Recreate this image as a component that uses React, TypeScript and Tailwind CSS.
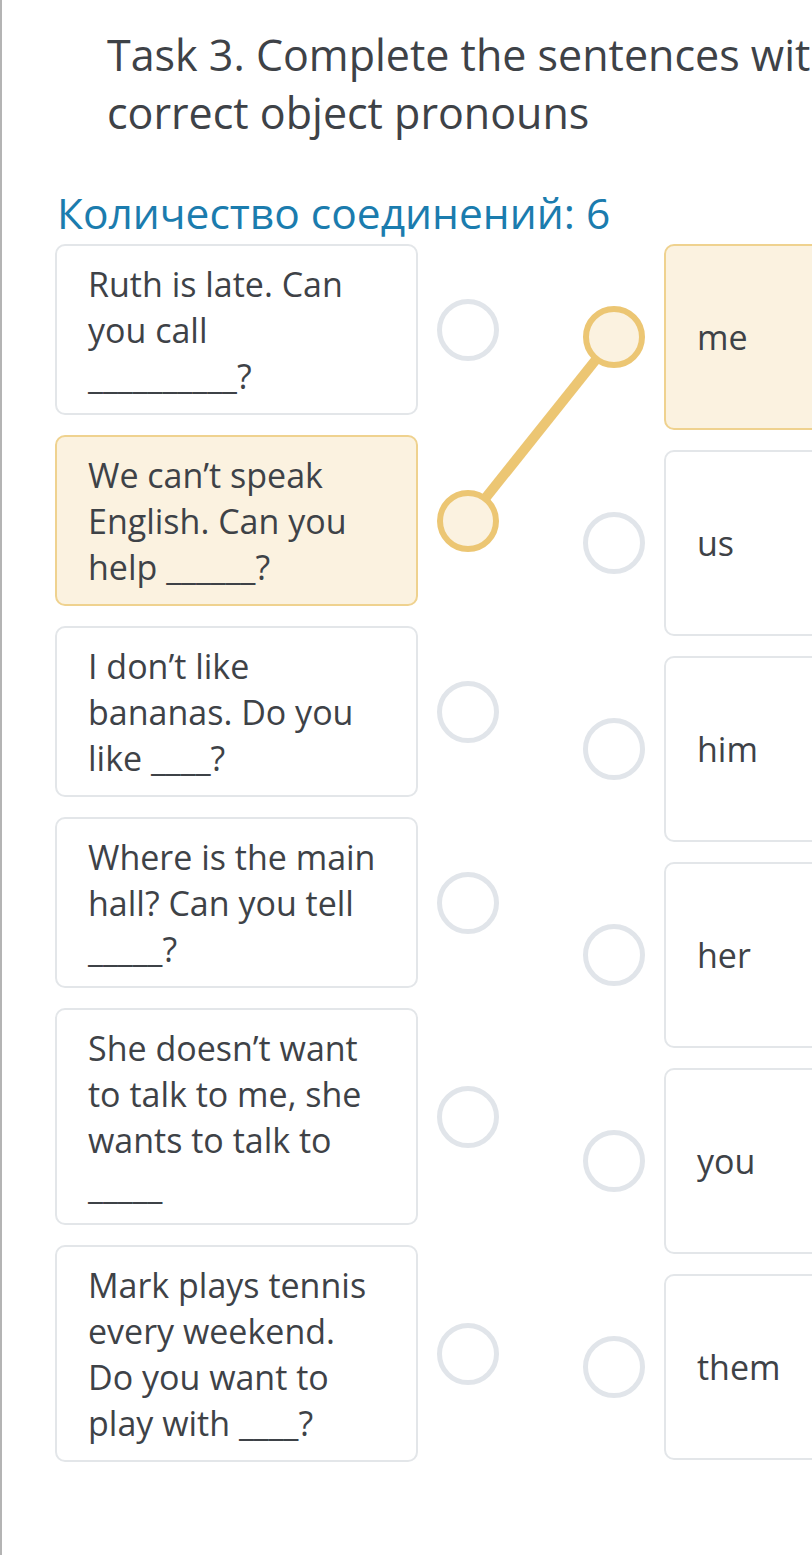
import React from "react";

const prompts = [
  { text: ["Ruth is late. Can", "you call", "__________?"], active: false },
  { text: ["We can’t speak", "English. Can you", "help ______?"], active: true },
  { text: ["I don’t like", "bananas. Do you", "like ____?"], active: false },
  { text: ["Where is the main", "hall? Can you tell", "_____?"], active: false },
  { text: ["She doesn’t want", "to talk to me, she", "wants to talk to", "_____"], active: false },
  { text: ["Mark plays tennis", "every weekend.", "Do you want to", "play with ____?"], active: false },
];

const answers = [
  { text: "me", active: true },
  { text: "us", active: false },
  { text: "him", active: false },
  { text: "her", active: false },
  { text: "you", active: false },
  { text: "them", active: false },
];

function Dot({ active }: { active: boolean }) {
  return (
    <div
      className={
        active
          ? "relative z-10 w-[62px] h-[62px] shrink-0 rounded-full border-[6px] border-[#ecc673] bg-[#fbf2e0]"
          : "relative z-10 w-[62px] h-[62px] shrink-0 rounded-full border-[5px] border-[#e1e5ea] bg-white"
      }
    />
  );
}

export default function App() {
  return (
    <div className="w-[812px] h-[1555px] overflow-hidden bg-white border-l-2 border-[#b4b4b4] font-['Open_Sans',sans-serif] text-[#3e4247]">
      <h1 className="pl-[105px] pt-[26px] text-[43px] leading-[58px] whitespace-nowrap font-normal">
        Task 3. Complete the sentences with
        <br />
        correct object pronouns
      </h1>

      <h2 className="mt-[47px] pl-[55px] text-[42.5px] leading-[48px] text-[#1b7cae] whitespace-nowrap">
        Количество соединений: 6
      </h2>

      <div className="relative mt-[7px] flex">
        {/* connection line */}
        <svg className="absolute left-0 top-0 z-0" width="812" height="1220">
          <line x1="466" y1="276" x2="612" y2="93" stroke="#ecc673" strokeWidth="10" />
        </svg>

        <div className="ml-[53px] flex flex-col gap-[20px]">
          {prompts.map((p, i) => (
            <div key={i} className="flex items-center">
              <div
                className={
                  p.active
                    ? "w-[363px] rounded-[10px] border-2 border-[#efd28f] bg-[#fbf2e0] pl-[31px] pr-3 py-[14.5px] text-[34px] leading-[46px]"
                    : "w-[363px] rounded-[10px] border-2 border-[#e3e6e9] bg-white pl-[31px] pr-3 py-[14.5px] text-[34px] leading-[46px]"
                }
              >
                {p.text.map((l, j) => (
                  <div key={j} className="whitespace-nowrap">
                    {l}
                  </div>
                ))}
              </div>
              <div className="ml-[19px]">
                <Dot active={p.active} />
              </div>
            </div>
          ))}
        </div>

        <div className="ml-[84px] flex flex-col gap-[20px]">
          {answers.map((a, i) => (
            <div key={i} className="flex items-center h-[186px]">
              <Dot active={a.active} />
              <div
                className={
                  a.active
                    ? "ml-[19px] h-full w-[220px] flex items-center rounded-[10px] border-2 border-[#efd28f] bg-[#fbf2e0] pl-[31px] text-[34px]"
                    : "ml-[19px] h-full w-[220px] flex items-center rounded-[10px] border-2 border-[#e3e6e9] bg-white pl-[31px] text-[34px]"
                }
              >
                {a.text}
              </div>
            </div>
          ))}
        </div>
      </div>
    </div>
  );
}
